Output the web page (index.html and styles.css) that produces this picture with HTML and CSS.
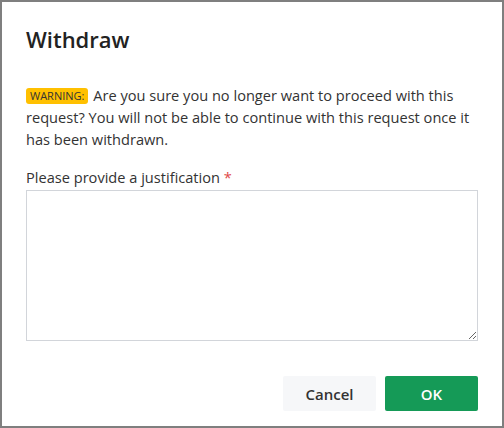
FILE: index.html
```html
<!DOCTYPE html>
<html lang="en">
  <head>
    <meta charset="UTF-8" />
    <meta name="viewport" content="width=device-width, initial-scale=1.0" />
    <title>Withdraw</title>
    <link rel="stylesheet" href="styles.css">
  </head>
  <body>
    <div class="modal">
      <h1 class="modal-title">Withdraw</h1>
      <p class="message">
        <span class="badge">WARNING:</span> Are you sure you no longer want to proceed with this request? You will not be able to continue with this request once it has been withdrawn.
      </p>
      <label class="field-label" for="justification">Please provide a justification <span class="required">*</span></label>
      <textarea id="justification" class="field"></textarea>
      <div class="actions">
        <button class="btn btn-cancel">Cancel</button>
        <button class="btn btn-ok">OK</button>
      </div>
    </div>
  </body>
</html>
```

FILE: styles.css
```css
html,
body {
  height: 100%;
}

body {
  margin: 0;
  padding: 2px;
  box-sizing: border-box;
  background-color: #7f7f7f;
  font-family: "Open Sans", Arial, sans-serif;
  color: #333333;
}

.modal {
  background-color: #ffffff;
  height: 100%;
  box-sizing: border-box;
  padding: 21px 24px 0 24px;
  display: flex;
  flex-direction: column;
}

.modal-title {
  margin: 0 0 29px 0;
  font-size: 22px;
  font-weight: 600;
  line-height: 32px;
  color: #222222;
}

.message {
  margin: 0 0 17px 0;
  font-size: 14.6px;
  line-height: 22px;
}

.badge {
  display: inline-block;
  background-color: #ffc000;
  color: #333333;
  font-size: 11px;
  line-height: 16px;
  padding: 0 4px;
  margin-right: 1px;
  border-radius: 3px;
  vertical-align: 1px;
}

.field-label {
  font-size: 14.6px;
  line-height: 20px;
  margin-bottom: 3px;
}

.required {
  color: #e04848;
}

.field {
  height: 151px;
  box-sizing: border-box;
  border: 1px solid #d2d5da;
  border-radius: 0;
  resize: vertical;
  font-family: inherit;
  margin: 0;
}

.actions {
  display: flex;
  justify-content: flex-end;
  gap: 9px;
  margin-top: 35px;
}

.btn {
  width: 93px;
  height: 35px;
  border: none;
  border-radius: 2px;
  font-family: inherit;
  font-size: 15px;
  font-weight: 600;
  cursor: pointer;
}

.btn-cancel {
  background-color: #f6f7f9;
  color: #333333;
}

.btn-ok {
  background-color: #159a57;
  color: #ffffff;
}
```
